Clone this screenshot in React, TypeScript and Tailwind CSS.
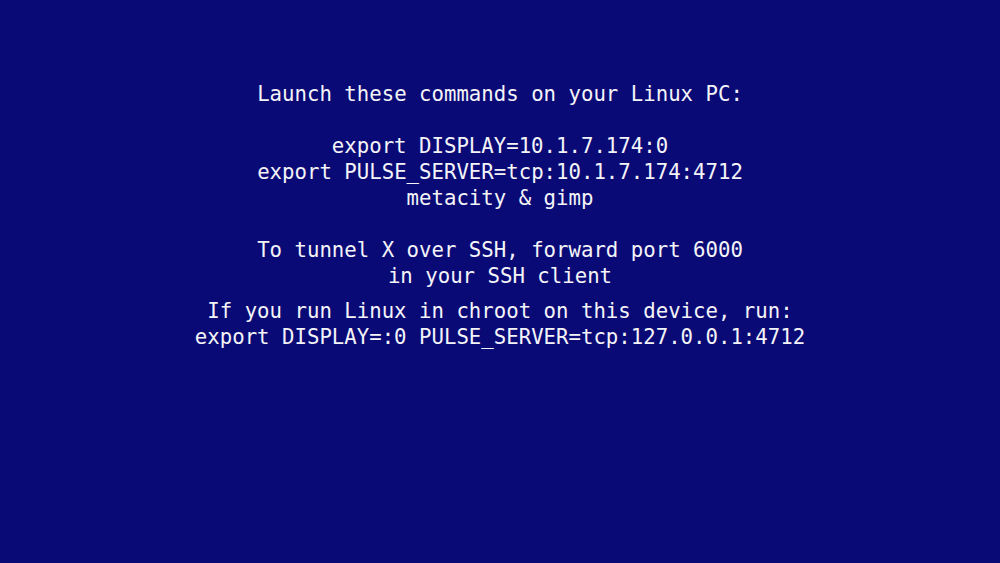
const blockOne = [
  "Launch these commands on your Linux PC:",
  "",
  "export DISPLAY=10.1.7.174:0",
  "export PULSE_SERVER=tcp:10.1.7.174:4712",
  "metacity & gimp",
  "",
  "To tunnel X over SSH, forward port 6000",
  "in your SSH client",
];

const blockTwo = [
  "If you run Linux in chroot on this device, run:",
  "export DISPLAY=:0 PULSE_SERVER=tcp:127.0.0.1:4712",
];

function Lines({ lines }: { lines: string[] }) {
  return (
    <div className="flex flex-col items-center">
      {lines.map((l, i) => (
        <div key={i} className="h-[26px] whitespace-pre">
          {l || " "}
        </div>
      ))}
    </div>
  );
}

export default function App() {
  return (
    <div
      className="w-[1000px] h-[563px] bg-[#0a0a76] text-[#f4f4f8] text-[20.7px] leading-[26px] pt-[81px] flex flex-col items-center gap-[9px]"
      style={{ fontFamily: '"DejaVu Sans Mono", monospace' }}
    >
      <Lines lines={blockOne} />
      <Lines lines={blockTwo} />
    </div>
  );
}
